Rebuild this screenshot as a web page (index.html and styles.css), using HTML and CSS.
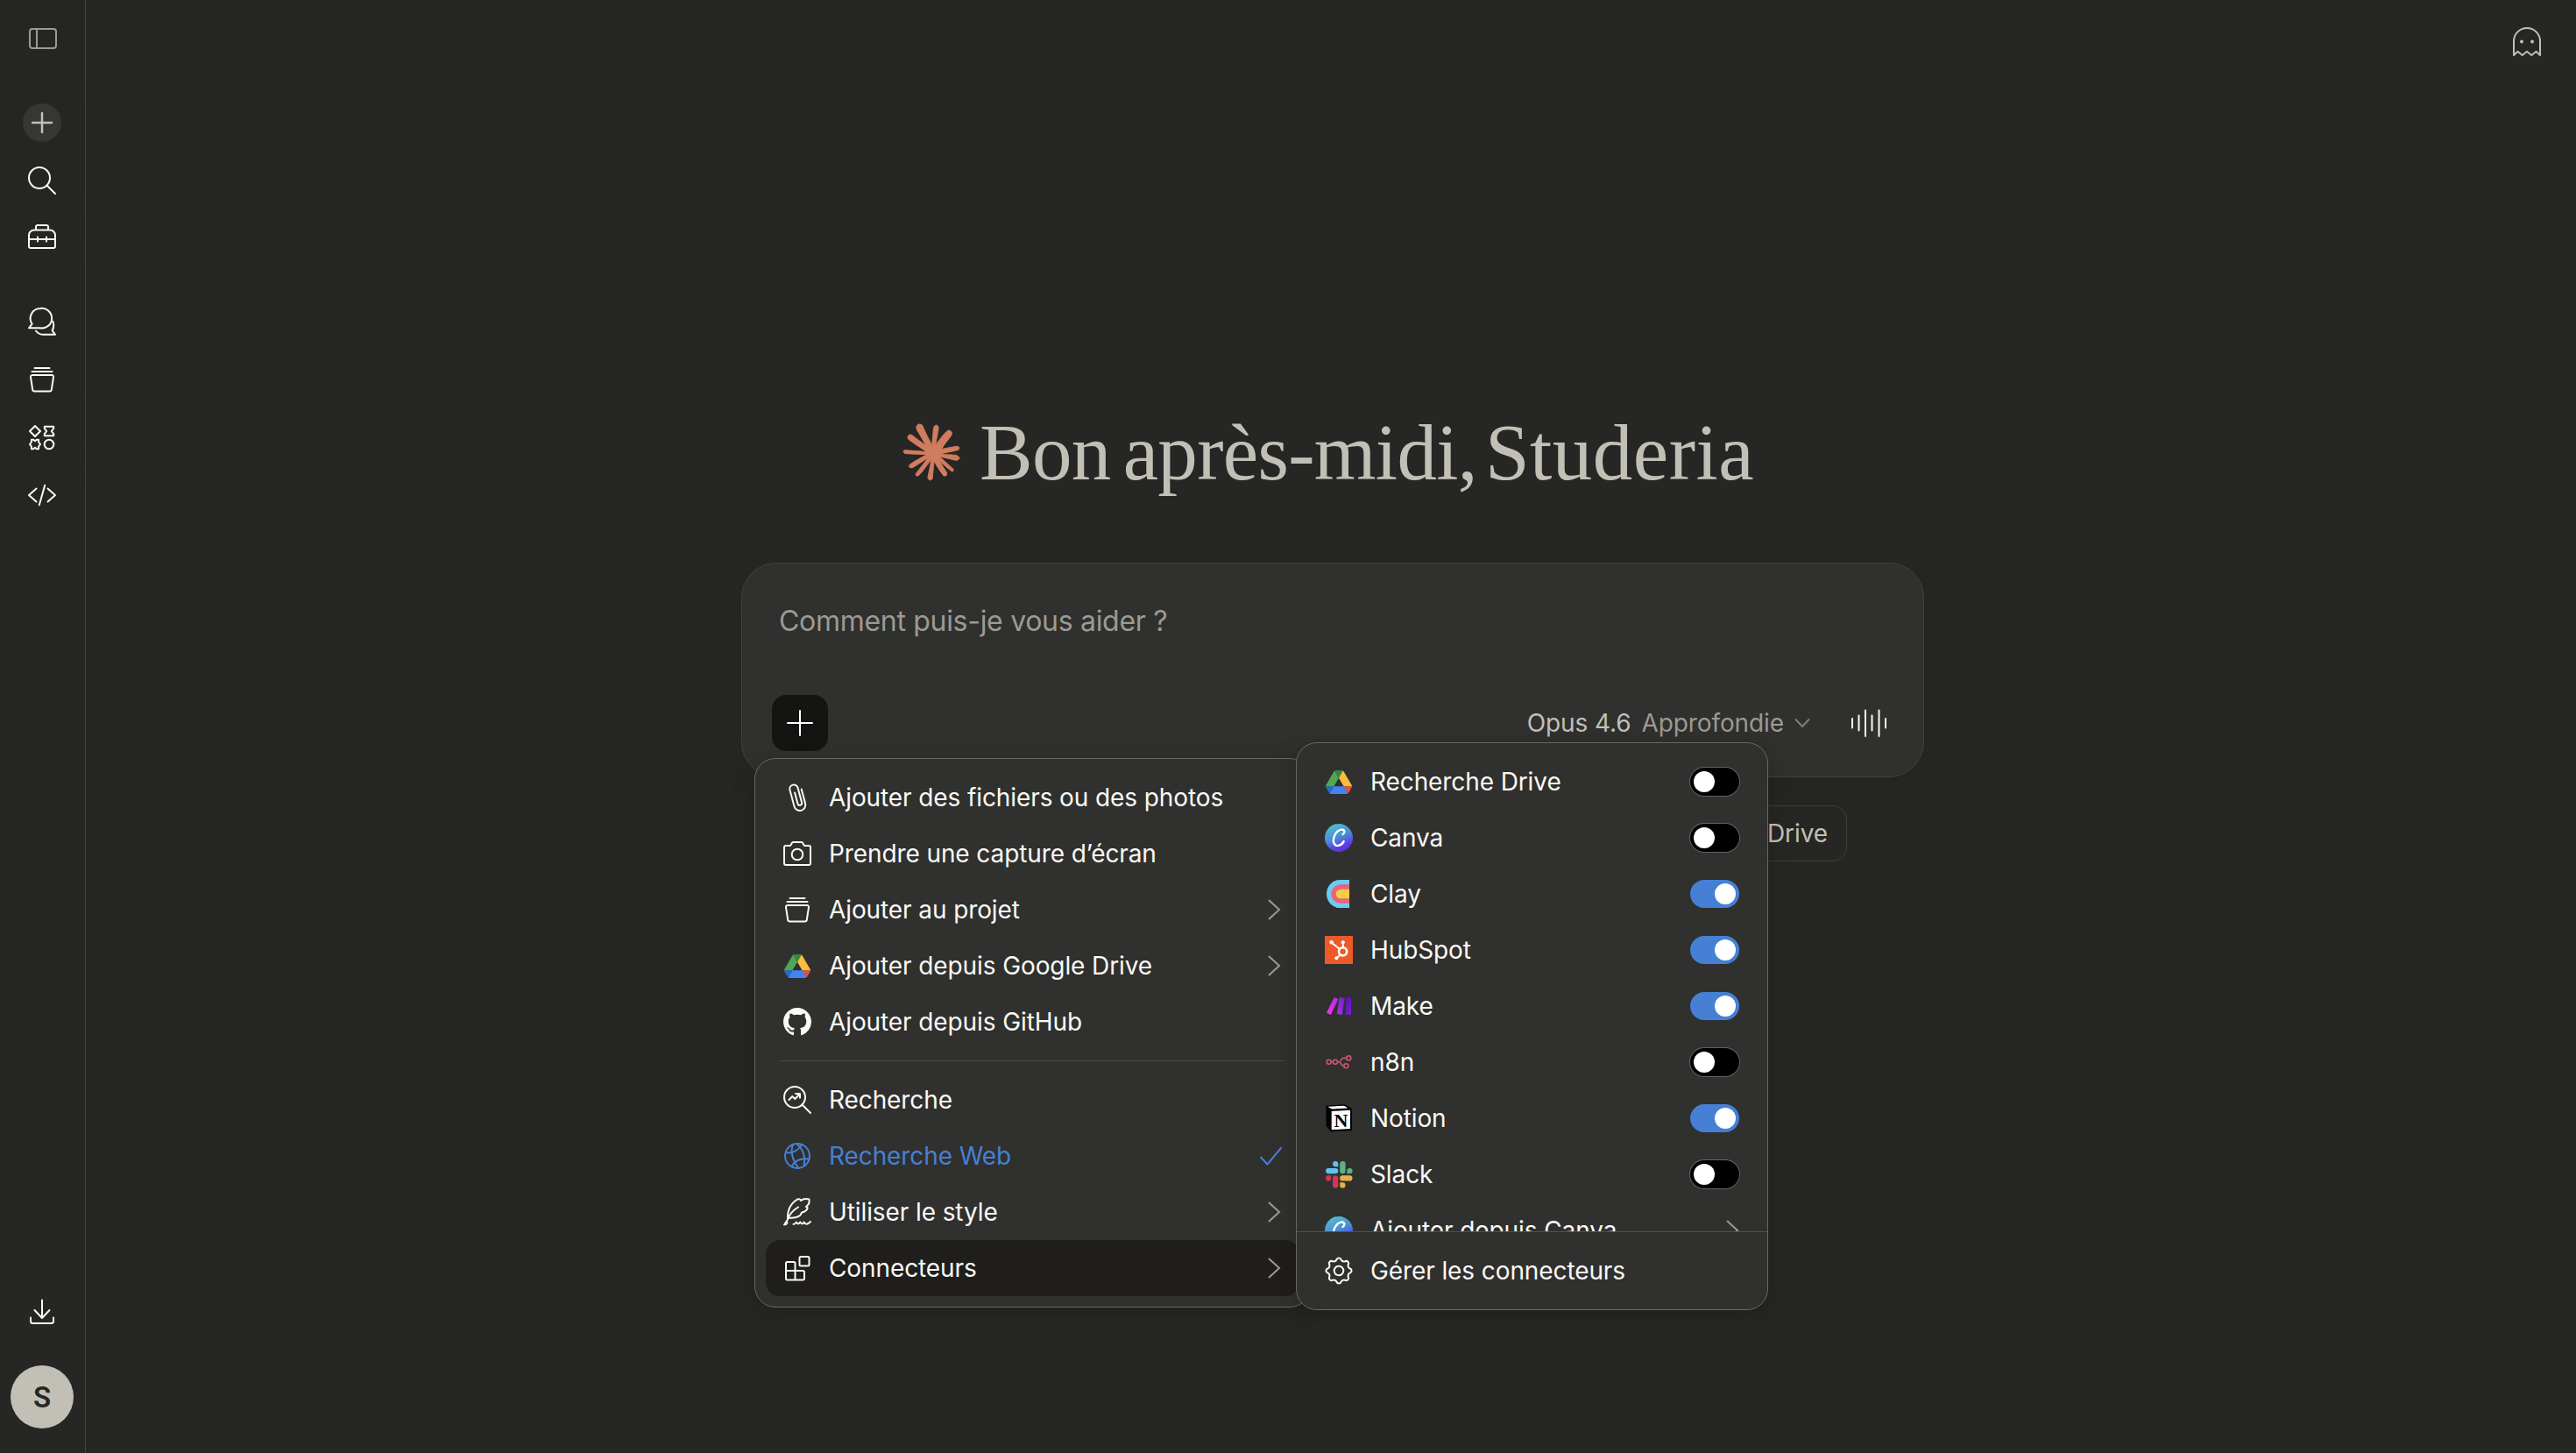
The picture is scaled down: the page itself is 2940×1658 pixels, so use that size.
FILE: index.html
```html
<!DOCTYPE html>
<html lang="fr">
<head>
    <meta charset="UTF-8">
    <meta name="viewport" content="width=device-width, initial-scale=1.0">
    <title>Nouvelle conversation</title>
    <link rel="stylesheet" href="styles.css">
</head>
<body>
    <!-- Shared icons -->
    <svg class="defs" width="0" height="0">
        <defs>
            <linearGradient id="canvaFill" x1="0.3" y1="0" x2="0.7" y2="1">
                <stop offset="0" stop-color="#52bfc9"/>
                <stop offset="0.45" stop-color="#4a8fd6"/>
                <stop offset="0.8" stop-color="#5a3fe0"/>
                <stop offset="1" stop-color="#6a26dc"/>
            </linearGradient>
            <linearGradient id="makeOne" x1="0.8" y1="0" x2="0.2" y2="1">
                <stop offset="0" stop-color="#b02fe0"/>
                <stop offset="1" stop-color="#f22ff5"/>
            </linearGradient>
            <linearGradient id="makeTwo" x1="1" y1="0" x2="0" y2="1">
                <stop offset="0" stop-color="#6d22c4"/>
                <stop offset="1" stop-color="#a436e6"/>
            </linearGradient>
            <linearGradient id="makeThree" x1="0" y1="0" x2="1" y2="1">
                <stop offset="0" stop-color="#5510ae"/>
                <stop offset="1" stop-color="#7a22d8"/>
            </linearGradient>
            <symbol id="projects" viewBox="0 0 40 40">
                <path d="M11.5 7h17M8.5 11h23M9 15h22a2 2 0 0 1 2 2.400l-2.200 14.200a2.200 2.200 0 0 1-2.200 1.900H11.400a2.200 2.200 0 0 1-2.200-1.900L7 17.400A2 2 0 0 1 9 15z"/>
            </symbol>
            <symbol id="chevron" viewBox="0 0 40 40">
                <path d="M14 9l12 11-12 11"/>
            </symbol>
            <symbol id="drive" viewBox="0 0 87.3 78">
                <path d="m6.6 66.85 3.85 6.65c.8 1.4 1.95 2.5 3.3 3.3l13.75-23.8h-27.5c0 1.55.4 3.1 1.2 4.5z" fill="#2a66d4"/>
                <path d="m43.65 25-13.75-23.8c-1.35.8-2.5 1.9-3.3 3.3l-25.4 44a9.06 9.06 0 0 0 -1.2 4.5h27.5z" fill="#4ea853"/>
                <path d="m73.55 76.8c1.35-.8 2.5-1.9 3.3-3.3l1.6-2.75 7.65-13.25c.8-1.4 1.2-2.95 1.2-4.5h-27.5l5.85 11.5z" fill="#dc5340"/>
                <path d="m43.65 25 13.75-23.8c-1.35-.8-2.9-1.2-4.5-1.2h-18.5c-1.6 0-3.15.45-4.5 1.2z" fill="#3a8440"/>
                <path d="m59.8 53h-32.3l-13.75 23.8c1.35.8 2.9 1.2 4.5 1.2h50.8c1.6 0 3.15-.45 4.5-1.2z" fill="#4384f3"/>
                <path d="m73.4 26.5-12.7-22c-.8-1.4-1.95-2.5-3.3-3.3l-13.75 23.8 16.15 28h27.45c0-1.55-.4-3.1-1.2-4.5z" fill="#f8bc41"/>
            </symbol>
            <symbol id="canva" viewBox="0 0 40 40">
                <circle cx="20" cy="20" r="16" fill="url(#canvaFill)"/>
                <path d="M24.500 16c1.500-1 2.300-3 1.500-4.300-1.200-1.700-4.600-1.500-7.300.8-3.300 2.800-5.400 8.200-4.700 12.300.6 3.200 3 4.600 5.600 4.100 2.600-.5 4.800-2.400 6-4.800" fill="none" stroke="#fff" stroke-width="2.400" stroke-linecap="round"/>
            </symbol>
        </defs>
    </svg>

    <div class="app">
        <!-- Sidebar -->
        <nav class="sidebar">
            <svg class="icon muted" viewBox="0 0 40 40"><rect x="6" y="9" width="30" height="22" rx="3"/><path d="M14 9v22"/></svg>
            <div class="nav-group first">
                <div class="nav-item"><span class="new-chat"><svg viewBox="0 0 44 44"><path d="M22 11v22M11 22h22"/></svg></span></div>
                <div class="nav-item"><svg class="icon" viewBox="0 0 40 40"><circle cx="17" cy="17" r="12"/><path d="M25.500 25.500l9.500 9.500"/></svg></div>
                <div class="nav-item"><svg class="icon" viewBox="0 0 40 40"><path d="M11 10.500h18a6 6 0 0 1 6 6V29a2 2 0 0 1-2 2H7a2 2 0 0 1-2-2V16.500a6 6 0 0 1 6-6zM13 10.500V7a2 2 0 0 1 2-2h10a2 2 0 0 1 2 2v3.500M5 21h30M15 18.500v5M25 18.500v5"/></svg></div>
            </div>
            <div class="nav-group">
                <div class="nav-item"><svg class="icon" viewBox="0 0 40 40"><path d="M18 5a11.300 11.300 0 1 1 0 22.300H5l3.600-4.700A11.300 11.300 0 0 1 18 5zM13 30.500c2 2.700 5 4.300 8.700 4.300H35l-3.300-4.500c1.500-3.100 2.200-6.500.8-10.300"/></svg></div>
                <div class="nav-item"><svg class="icon"><use href="#projects"/></svg></div>
                <div class="nav-item"><svg class="icon" viewBox="0 0 40 40"><path d="M12 7l6 6-6 6-6-6zM22.800 7.800h10.400v2l-2.400 3.200 2.400 3.200v2H22.800v-2l2.400-3.200-2.400-3.200zM12 24.300l1.800-1.500h2.300v2.700l1.900 2.500-1.900 2.500v2.700h-2.300L12 31.700l-1.800 1.500H7.900v-2.700L6 28l1.900-2.500v-2.700h2.300z"/><circle cx="28" cy="28" r="5.300"/></svg></div>
                <div class="nav-item"><svg class="icon" viewBox="0 0 40 40"><path d="M13.500 12.500L5 20l8.500 7.500M26.500 12.500L35 20l-8.500 7.500M23.200 8.800l-6.400 22.400"/></svg></div>
            </div>
            <div class="sidebar-bottom">
                <svg class="icon" viewBox="0 0 40 40"><path d="M20 6.500v20.500M11.500 18l8.500 9 8.500-9M7 26.500v4a2.500 2.500 0 0 0 2.500 2.500h21a2.500 2.500 0 0 0 2.500-2.500v-4"/></svg>
                <div class="avatar">S</div>
            </div>
        </nav>

        <main class="main">
            <svg class="icon ghost" viewBox="0 0 40 40"><path d="M5 35V19a15 15 0 0 1 30 0v16l-4.500-4.200-5.200 4.200-5.300-4.200-5.300 4.200-5.200-4.200z"/><circle class="eye" cx="14" cy="19.500" r="2"/><circle class="eye" cx="26" cy="19.500" r="2"/></svg>

            <div class="center">
                <div class="greeting">
                    <svg class="spark" viewBox="0 0 24 24"><path d="m4.714 15.956 4.718-2.648.079-.23-.08-.128h-.23l-.79-.048-2.695-.073-2.337-.097-2.265-.122-.57-.121-.535-.704.055-.353.48-.321.685.06 1.518.104 2.277.157 1.651.098 2.447.255h.389l.054-.158-.133-.097-.103-.098-2.356-1.596-2.55-1.688-1.336-.972-.722-.491-.365-.462-.158-1.008.656-.722.88.06.225.061.893.686 1.906 1.476 2.49 1.833.364.304.145-.103.018-.073-.164-.274-1.354-2.446-1.445-2.49-.643-1.032-.17-.619a2.972 2.972 0 0 1-.103-.729L6.287.134 6.7 0l.996.134.419.364.619 1.415 1.002 2.228 1.554 3.03.455.898.243.832.091.255h.158V9.01l.127-1.706.237-2.095.23-2.695.08-.76.376-.91.747-.492.583.28.48.685-.067.444-.286 1.851-.558 2.903-.365 1.942h.213l.243-.242.983-1.306 1.652-2.064.728-.82.85-.904.547-.431h1.032l.759 1.129-.34 1.166-1.063 1.347-.88 1.142-1.263 1.7-.79 1.36.074.11.188-.02 2.853-.606 1.542-.28 1.84-.315.832.388.09.395-.327.807-1.967.486-2.307.462-3.437.813-.043.03.049.061 1.548.146.662.036h1.62l3.018.225.79.522.473.638-.08.485-1.213.62-1.64-.389-3.825-.91-1.31-.329h-.183v.11l1.093 1.068 2.003 1.81 2.508 2.33.127.578-.321.455-.34-.049-2.204-1.657-.85-.747-1.925-1.62h-.127v.17l.443.649 2.343 3.521.122 1.08-.17.353-.607.213-.668-.122-1.372-1.924-1.415-2.168-1.141-1.943-.14.08-.674 7.254-.316.37-.728.28-.607-.461-.322-.747.322-1.476.388-1.924.316-1.53.285-1.9.17-.632-.012-.042-.14.018-1.432 1.967-2.18 2.945-1.724 1.845-.413.164-.716-.37.066-.662.401-.589 2.386-3.036 1.439-1.882.929-1.086-.006-.158h-.055L4.138 18.56l-1.13.146-.485-.456.06-.746.231-.243 1.907-1.312Z"/></svg>
                    <h1>Bon après-midi, <span class="name">Studeria</span></h1>
                </div>

                <div class="composer">
                    <div class="placeholder">Comment puis-je vous aider ?</div>
                    <div class="composer-bar">
                        <button class="add-btn"><svg class="icon" viewBox="0 0 40 40"><path d="M20 6v28M6 20h28"/></svg></button>
                        <div class="model">
                            <span class="model-name">Opus 4.6</span>
                            <span class="model-mode">Approfondie</span>
                            <svg class="caret" viewBox="0 0 24 24"><path d="M4 7.500l8 8.500 8-8.500"/></svg>
                        </div>
                        <svg class="wave" viewBox="0 0 44 40"><path d="M3 15v10.500M10.500 11.500v17M18 5.500v29.500M25.500 11.500v17M33.500 5.500v29.500M41 15v10.500"/></svg>
                    </div>
                </div>

                <div class="chips">
                    <div class="chip">Drive</div>
                </div>
            </div>
        </main>
    </div>

    <!-- Add menu -->
    <div class="menu add-menu">
        <div class="menu-row"><svg class="icon" viewBox="0 0 40 40"><path transform="rotate(-15 20 20)" d="M27 12v17a6.500 6.500 0 0 1-13 0V9.500a4.700 4.700 0 0 1 9.400 0V27a2.400 2.400 0 0 1-4.800 0V14"/></svg><span>Ajouter des fichiers ou des photos</span></div>
        <div class="menu-row"><svg class="icon" viewBox="0 0 40 40"><path d="M7 11h5l2.500-4h11l2.500 4h5a2 2 0 0 1 2 2v18a2 2 0 0 1-2 2H7a2 2 0 0 1-2-2V13a2 2 0 0 1 2-2z"/><circle cx="20" cy="21" r="6.300"/></svg><span>Prendre une capture d’écran</span></div>
        <div class="menu-row"><svg class="icon"><use href="#projects"/></svg><span>Ajouter au projet</span><svg class="icon chevron"><use href="#chevron"/></svg></div>
        <div class="menu-row"><span class="logo-box"><svg class="drive"><use href="#drive"/></svg></span><span>Ajouter depuis Google Drive</span><svg class="icon chevron"><use href="#chevron"/></svg></div>
        <div class="menu-row"><span class="logo-box"><svg class="github" viewBox="0 0 16 16"><path d="M8 0C3.580 0 0 3.580 0 8c0 3.540 2.290 6.530 5.470 7.590.4.070.55-.17.55-.38 0-.19-.01-.82-.01-1.490-2.010.37-2.530-.49-2.690-.94-.09-.23-.48-.94-.82-1.130-.28-.15-.68-.52-.01-.53.63-.01 1.080.58 1.230.82.72 1.210 1.870.87 2.330.66.070-.52.28-.87.51-1.070-1.780-.2-3.640-.89-3.640-3.950 0-.87.31-1.590.82-2.150-.08-.2-.36-1.020.08-2.120 0 0 .67-.21 2.200.82.64-.18 1.320-.27 2-.27s1.360.09 2 .27c1.530-1.040 2.200-.82 2.200-.82.44 1.100.16 1.920.08 2.120.51.56.82 1.270.82 2.150 0 3.070-1.870 3.750-3.650 3.950.29.25.54.73.54 1.480 0 1.070-.01 1.930-.01 2.200 0 .21.15.46.55.38A8.010 8.010 0 0 0 16 8c0-4.420-3.580-8-8-8z"/></svg></span><span>Ajouter depuis GitHub</span></div>
        <hr>
        <div class="menu-row"><svg class="icon" viewBox="0 0 40 40"><circle cx="17" cy="17" r="12"/><path d="M25.500 25.500l9.500 9.500M10.500 20l3.800-4 3 3 5.500-5.800M18 13h5v4.800"/></svg><span>Recherche</span></div>
        <div class="menu-row active"><svg class="icon" viewBox="0 0 40 40"><circle cx="20" cy="20" r="14"/><path d="M15 7c-3 7-1 18 6.500 27M19 6.300c7 5 10.500 14 8.500 25.500M7 16c7 1.500 13-1.500 18-8.800M13.500 32c3-6 10-9.500 20-8.500"/></svg><span>Recherche Web</span><svg class="icon check" viewBox="0 0 40 40"><path d="M5 21.500l7.500 8L28 11"/></svg></div>
        <div class="menu-row"><svg class="icon" viewBox="0 0 40 40"><path d="M5 34.500l4-6c-.5-9 3-18 11-23 2-.8 3.500 0 4 1.500 2-1.700 5.500-2.300 9.500-1.500.5 4.500-.5 6-3.500 8.500 1.500.5 2 1 1.500 2-1.500 3-3.500 4-6.500 4.500-1 4-5 7-16 6M9 28.500c2-6 6-10.500 12-14M5 34.500c2 0 3-1 3.500-2.500M15.500 34c1.500 0 2.500-1 3.500-2.500 1 2.500 2 3 4.500 0 1 2.500 3 3 4 0 2 3.500 4.500 2.500 7.500-.5"/></svg><span>Utiliser le style</span><svg class="icon chevron"><use href="#chevron"/></svg></div>
        <div class="menu-row selected"><svg class="icon" viewBox="0 0 40 40"><rect x="22.500" y="7" width="11" height="10.500" rx="1.500"/><path d="M8.500 13h7.500a1.500 1.500 0 0 1 1.500 1.500V23h9a1.500 1.500 0 0 1 1.500 1.500v7.500a1.500 1.500 0 0 1-1.500 1.500h-18A1.500 1.500 0 0 1 7 32V14.500A1.500 1.500 0 0 1 8.500 13zM7 23h10.500v10.500"/></svg><span>Connecteurs</span><svg class="icon chevron"><use href="#chevron"/></svg></div>
    </div>

    <!-- Connectors submenu -->
    <div class="menu connectors">
        <div class="connector-list">
            <div class="menu-row"><span class="logo-box"><svg class="drive"><use href="#drive"/></svg></span><span>Recherche Drive</span><i class="toggle"></i></div>
            <div class="menu-row"><svg class="logo"><use href="#canva"/></svg><span>Canva</span><i class="toggle"></i></div>
            <div class="menu-row"><svg class="logo" viewBox="0 0 40 40"><path d="M32 4H21a15 16 0 0 0 0 32h11z" fill="#6bcbf5"/><path d="M32 9.300H22a10.700 10.700 0 0 0 0 21.400h10z" fill="#ea6377"/><path d="M32 14.700H22a5.300 5.300 0 0 0 0 10.600h10z" fill="#f6cb45"/></svg><span>Clay</span><i class="toggle on"></i></div>
            <div class="menu-row"><svg class="logo" viewBox="0 0 40 40"><path d="M4 4h32v32H4z" fill="#ec5a29"/><g fill="none" stroke="#fff"><circle cx="24.600" cy="21.800" r="4.600" stroke-width="2.600"/><path d="M24.800 17v-5M20.800 18.700l-9-7M21.500 25.500l-4 4" stroke-width="2"/></g><g fill="#fff"><circle cx="24.800" cy="11.300" r="2.100"/><circle cx="11.600" cy="11.300" r="2.300"/><circle cx="17.300" cy="29.300" r="2"/></g></svg><span>HubSpot</span><i class="toggle on"></i></div>
            <div class="menu-row"><svg class="logo" viewBox="0 0 40 40"><path d="M14.800 10l4.600 2.200L10.800 30 6 27.800z" fill="url(#makeOne)"/><path d="M20.800 10l5.800 1-2.800 19-5.800-1z" fill="url(#makeTwo)"/><path d="M27.700 10.200H34v19.600h-6.300z" fill="url(#makeThree)"/></svg><span>Make</span><i class="toggle on"></i></div>
            <div class="menu-row"><svg class="logo" viewBox="0 0 40 40"><g fill="none" stroke="#ce5570" stroke-width="1.600"><circle cx="8.700" cy="19.800" r="2.500"/><circle cx="16" cy="19.800" r="2.500"/><circle cx="31.300" cy="15.400" r="2.500"/><circle cx="28.300" cy="24.200" r="2.500"/><path d="M11.200 19.800h2.300M18.500 19.800h1.700c3 0 1.500-4.400 5-4.400h3.600M20.200 19.800c3 0 1.500 4.400 5 4.400h.6"/></g></svg><span>n8n</span><i class="toggle"></i></div>
            <div class="menu-row"><svg class="logo" viewBox="0 0 40 40"><path d="M5.500 5.500l21-1.200 8.500 5V34l-24 1.200-5.500-6.500z" fill="#000"/><path d="M7.500 6.700l18.500-1 4.500 2.800-18.500 1zM11.700 12L33 10.700V32l-21.300 1.200z" fill="#fff"/><text x="22.400" y="29.500" class="notion-n">N</text></svg><span>Notion</span><i class="toggle on"></i></div>
            <div class="menu-row"><svg class="logo" viewBox="0 0 40 40"><path d="M19.300 11.200h-3.100A3.100 3.100 0 1 1 19.300 8zM8.200 12.900h8a3.150 3.150 0 0 1 0 6.300h-8a3.150 3.150 0 0 1 0-6.300z" fill="#63c1ec"/><path d="M29.300 19.200v-3.100a3.150 3.150 0 1 1 3.150 3.100zM21.200 8.100a3.200 3.200 0 0 1 6.400 0v8a3.200 3.200 0 0 1-6.400 0z" fill="#5bb381"/><path d="M21.200 29.300h3.100a3.150 3.150 0 1 1-3.100 3.150zM24.300 21.300h8.100a3.150 3.150 0 0 1 0 6.300h-8.100a3.150 3.150 0 0 1 0-6.300z" fill="#e3b147"/><path d="M11.200 21.300v3.100a3.100 3.100 0 1 1-3.100-3.100zM13 24.400a3.150 3.150 0 0 1 6.300 0v8a3.150 3.150 0 0 1-6.300 0z" fill="#ce375c"/></svg><span>Slack</span><i class="toggle"></i></div>
            <div class="menu-row"><svg class="logo"><use href="#canva"/></svg><span>Ajouter depuis Canva</span><svg class="icon chevron"><use href="#chevron"/></svg></div>
        </div>
        <div class="connector-footer">
            <div class="menu-row"><svg class="icon" viewBox="0 0 40 40"><path d="M32.760 17.520A2.600 2.600 0 0 1 32.760 22.480A4 4 0 0 0 30.780 27.270A2.600 2.600 0 0 1 27.270 30.780A4 4 0 0 0 22.480 32.760A2.600 2.600 0 0 1 17.520 32.760A4 4 0 0 0 12.730 30.780A2.600 2.600 0 0 1 9.220 27.270A4 4 0 0 0 7.240 22.480A2.600 2.600 0 0 1 7.240 17.520A4 4 0 0 0 9.220 12.730A2.600 2.600 0 0 1 12.730 9.220A4 4 0 0 0 17.520 7.240A2.600 2.600 0 0 1 22.480 7.240A4 4 0 0 0 27.270 9.220A2.600 2.600 0 0 1 30.780 12.730A4 4 0 0 0 32.760 17.520z"/><circle cx="20" cy="20" r="5.300"/></svg><span>Gérer les connecteurs</span></div>
        </div>
    </div>
</body>
</html>
```
FILE: styles.css
```css
:root {
    --bg: #262624;
    --panel: #30302e;
    --text: #faf9f5;
    --text-soft: #c2c0b6;
    --text-muted: #9c9a92;
    --blue: #4680d5;
    --menu-border: #686864;
}

* {
    margin: 0;
    padding: 0;
    box-sizing: border-box;
}

body {
    overflow: hidden;
    background-color: var(--bg);
    color: var(--text);
    font-family: Inter, "Liberation Sans", sans-serif;
    font-size: 28px;
    letter-spacing: -0.1px;
}

.defs {
    position: absolute;
}

.app {
    display: flex;
    height: 100vh;
}

.icon {
    display: block;
    width: 40px;
    height: 40px;
    flex: none;
    fill: none;
    stroke: currentColor;
    stroke-width: 2;
    stroke-linejoin: round;
    stroke-linecap: round;
}

.muted {
    color: var(--text-muted);
}

/* Sidebar */
.sidebar {
    width: 98px;
    padding: 24px 1px 28px 0;
    border-right: 1px solid #42423f;
    background: linear-gradient(#252523, #262624);
    display: flex;
    flex-direction: column;
    align-items: center;
}

.nav-group {
    display: flex;
    flex-direction: column;
    gap: 2px;
    margin-top: 31px;
}

.nav-group.first {
    margin-top: 44px;
}

.nav-item {
    height: 64px;
    display: flex;
    align-items: center;
    justify-content: center;
}

.new-chat {
    width: 44px;
    height: 44px;
    border-radius: 50%;
    background-color: #363633;
    stroke: var(--text-soft);
    stroke-width: 2.5;
    stroke-linecap: round;
}

.sidebar-bottom {
    margin-top: auto;
    display: flex;
    flex-direction: column;
    align-items: center;
    gap: 41px;
}

.avatar {
    width: 72px;
    height: 72px;
    border-radius: 50%;
    background-color: var(--text-soft);
    color: #262624;
    font-family: Roboto, sans-serif;
    font-size: 33px;
    font-weight: 600;
    line-height: 73px;
    text-align: center;
}

/* Main column */
.main {
    flex: 1;
    display: flex;
    flex-direction: column;
}

.ghost {
    align-self: flex-end;
    margin: 28px 36px 0 0;
    color: var(--text-soft);
}

.eye {
    fill: currentColor;
    stroke: none;
}

.center {
    width: 1350px;
    margin: 396px 0 0 748px;
}

.greeting {
    display: flex;
    align-items: center;
    gap: 23px;
    height: 104px;
    margin-left: 185px;
}

.spark {
    width: 64px;
    height: 64px;
    fill: #d07c5f;
    stroke: #d07c5f;
    stroke-width: 0.35;
    overflow: visible;
}

h1 {
    padding-top: 2px;
    font-family: "Liberation Serif", serif;
    font-size: 91px;
    font-weight: 400;
    line-height: 102px;
    letter-spacing: -0.7px;
    word-spacing: -8px;
    color: var(--text-soft);
    white-space: nowrap;
}

.name {
    margin-left: -5px;
    letter-spacing: 0.5px;
}

.composer {
    height: 245px;
    margin-top: 74px;
    padding: 43px 34px 29px;
    border: 1px solid #41413e;
    border-radius: 40px;
    background-color: var(--panel);
    box-shadow: 0 8px 40px rgba(0, 0, 0, 0.06);
    display: flex;
    flex-direction: column;
    justify-content: space-between;
}

.placeholder {
    padding-left: 8px;
    font-size: 32px;
    line-height: 46px;
    letter-spacing: -0.3px;
    color: var(--text-muted);
}

.composer-bar {
    display: flex;
    align-items: center;
}

.add-btn {
    width: 64px;
    height: 64px;
    border: none;
    border-radius: 16px;
    background-color: #141413;
    color: #fff;
    display: flex;
    align-items: center;
    justify-content: center;
}

.model {
    margin-left: auto;
    display: flex;
    align-items: center;
    gap: 12px;
}

.model-name {
    color: var(--text-soft);
}

.model-mode {
    color: var(--text-muted);
}

.caret {
    width: 24px;
    height: 24px;
    margin-left: -3px;
    fill: none;
    stroke: #7f7e77;
    stroke-width: 2;
}

.wave {
    width: 44px;
    height: 40px;
    margin: 0 6px 0 42px;
    fill: none;
    stroke: var(--text);
    stroke-width: 2;
    stroke-linecap: round;
}

.chips {
    display: flex;
    justify-content: flex-end;
    margin: 32px 88px 0 0;
}

.chip {
    height: 64px;
    padding: 0 21px 0 32px;
    border: 1px solid #3d3d3a;
    border-radius: 16px;
    line-height: 63px;
    color: var(--text-soft);
}

/* Menus */
.menu {
    position: absolute;
    border: 1px solid var(--menu-border);
    border-radius: 24px;
    background-color: var(--panel);
    box-shadow: 0 4px 24px rgba(0, 0, 0, 0.2);
}

.add-menu {
    left: 861px;
    top: 865px;
    width: 635px;
    padding: 12px;
}

.connectors {
    left: 1479px;
    top: 847px;
    width: 539px;
    overflow: hidden;
}

.connector-list {
    height: 557px;
    padding: 12px 12px 0;
    overflow: hidden;
}

.connector-footer {
    padding: 12px;
    border-top: 1px solid #51514d;
}

.menu-row {
    height: 64px;
    padding: 0 16px;
    border-radius: 16px;
    display: flex;
    align-items: center;
    gap: 16px;
    line-height: 36px;
    white-space: nowrap;
}

.menu-row.active {
    color: var(--blue);
}

.menu-row.selected {
    background-color: #1f1e1d;
}

.add-menu hr {
    height: 1px;
    margin: 12px 16px;
    border: none;
    background-color: #4b4b48;
}

.chevron {
    margin-left: auto;
    margin-right: -7px;
    color: var(--text-muted);
    stroke-linecap: butt;
    stroke-linejoin: miter;
}

.connectors .chevron {
    margin-right: -8px;
}

.check {
    margin-left: auto;
    margin-right: -7px;
}

.logo-box {
    width: 40px;
    height: 40px;
    flex: none;
    display: flex;
    align-items: center;
    justify-content: center;
}

.logo {
    width: 40px;
    height: 40px;
    flex: none;
}

.drive {
    width: 30px;
    height: 27px;
}

.github {
    width: 32px;
    height: 32px;
    fill: var(--text);
}

.notion-n {
    font-family: "Liberation Serif", serif;
    font-size: 22px;
    font-weight: 700;
    text-anchor: middle;
}

.toggle {
    width: 56px;
    height: 32px;
    margin-left: auto;
    margin-right: 4px;
    padding: 4px;
    border-radius: 16px;
    background-color: #000;
    box-shadow: 0 0 0 1px #62625e;
    display: flex;
}

.toggle::before {
    content: "";
    width: 24px;
    height: 24px;
    border-radius: 50%;
    background-color: #fff;
}

.toggle.on {
    justify-content: flex-end;
    background-color: var(--blue);
    box-shadow: none;
}
```
